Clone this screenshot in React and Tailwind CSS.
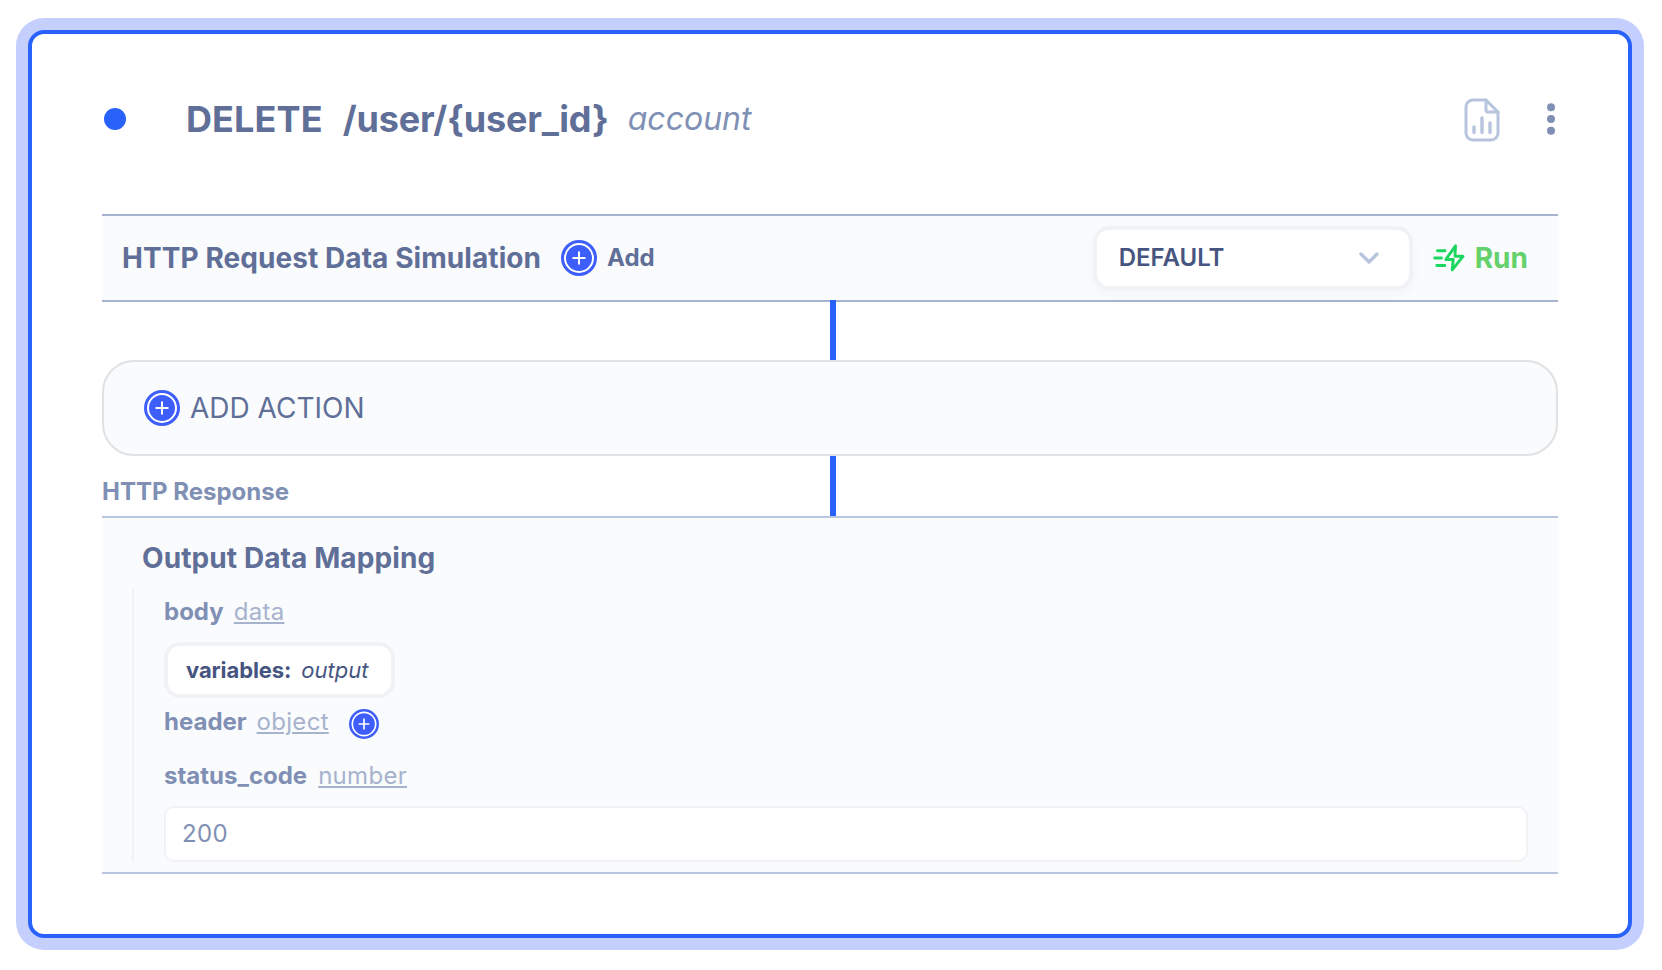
function PlusBadge({ className }) {
  return (
    <svg viewBox="0 0 36 36" className={className} fill="none">
      <circle cx="18" cy="18" r="18" fill="#3d5efa" />
      <circle cx="18" cy="18" r="14" stroke="#fff" strokeWidth="2" />
      <path d="M18 11.500v13M11.500 18h13" stroke="#fff" strokeWidth="2" />
    </svg>
  );
}

function ReportIcon() {
  return (
    <svg viewBox="0 0 36 44" className="mt-0.5 h-11 w-9 shrink-0" fill="none" stroke="#b8c3de" strokeWidth="3" strokeLinecap="round" strokeLinejoin="round">
      <path d="M22 2H9a7 7 0 0 0-7 7v26a7 7 0 0 0 7 7h18a7 7 0 0 0 7-7V14Z" />
      <path d="M22 2v10.500a1.500 1.500 0 0 0 1.500 1.500H34" />
      <path d="M10 29v5.500M18 20v14.500M26 25v9.500" strokeWidth="3.400" />
    </svg>
  );
}

function RunIcon() {
  return (
    <svg viewBox="0 0 32 28" className="h-7 w-8 shrink-0" fill="none" stroke="#1bd760" strokeWidth="2.900" strokeLinecap="round" strokeLinejoin="round">
      <path d="M22.500 1.800 12.800 15.500H20.200l-1 10.300L30 12.300h-8Z" />
      <path d="M4.500 6.700h7.500M1.700 14h6.800M3.800 21.500h8" />
    </svg>
  );
}

function Field({ name, type, className = "", children }) {
  return (
    <div className={`flex h-[54px] items-center gap-[10px] text-2xl ${className}`}>
      <span className="font-bold text-[#8090b4]">{name}</span>
      <span className="tracking-[0.012em] text-[#a7b3ce] underline decoration-2 underline-offset-2">{type}</span>
      {children}
    </div>
  );
}

export default function App() {
  return (
    <div className="h-[970px] w-[1662px] bg-white px-4 pt-[18px] font-['Inter',sans-serif] text-[#5f6f98]">
      <div className="h-[932px] w-[1628px] rounded-[28px] bg-[#c5cffd] p-3">
        <main className="h-full rounded-2xl border-4 border-[#2962fa] bg-white px-[70px]">
          <header className="flex h-[180px] items-center pb-[10px]">
            <span className="ml-0.5 size-[22px] rounded-full bg-[#2962fa]" />
            <h1 className="ml-[60px] flex items-center text-4xl font-bold">
              <span className="tracking-[0.003em]">DELETE</span>
              <span className="ml-5 tracking-[-0.005em]">/user/&#123;user_id&#125;</span>
            </h1>
            <span className="ml-[19px] text-[32px] text-[#8090b4] italic">account</span>
            <div className="ml-auto flex items-center gap-[47px] pr-[3px]">
              <ReportIcon />
              <svg viewBox="0 0 8 32" className="h-8 w-2" fill="#8090b4">
                <circle cx="4" cy="4.200" r="4" />
                <circle cx="4" cy="16" r="4" />
                <circle cx="4" cy="27.800" r="4" />
              </svg>
            </div>
          </header>

          <section className="flex h-[88px] items-center border-y-2 border-[#a7b4cf] bg-[#fafbfd] pr-[30px] pl-5">
            <h2 className="text-[28px] font-bold tracking-[0.0025em]">HTTP Request Data Simulation</h2>
            <PlusBadge className="ml-5 size-9" />
            <span className="ml-[10px] text-2xl font-bold">Add</span>
            <div className="ml-auto flex h-16 w-80 items-center justify-between rounded-2xl border-4 border-[#f1f2f6] bg-white pr-[30px] pl-[22px] shadow-[0_4px_12px_rgba(20,30,60,0.03)]">
              <span className="text-2xl font-semibold text-[#465580]">DEFAULT</span>
              <svg viewBox="0 0 20 12" className="h-3 w-5" fill="none" stroke="#b9c4de" strokeWidth="3.500" strokeLinecap="round" strokeLinejoin="round">
                <path d="m2 2 8 8 8-8" />
              </svg>
            </div>
            <div className="ml-5 flex items-center gap-[10px]">
              <RunIcon />
              <span className="text-[28px] font-bold text-[#65d16c]">Run</span>
            </div>
          </section>
          <div className="-mt-0.5 ml-[728px] h-[60px] w-1.5 bg-[#2962fa]" />

          <section className="flex h-24 items-center gap-[10px] rounded-[32px] border-2 border-[#e0e1e3] bg-[#fafbfd] pl-10">
            <PlusBadge className="size-9" />
            <span className="text-[28px]">ADD ACTION</span>
          </section>

          <div className="flex h-[60px]">
            <span className="w-[728px] pt-5 text-2xl font-bold text-[#8090b4]">HTTP Response</span>
            <span className="w-1.5 bg-[#2962fa]" />
          </div>

          <section className="h-[358px] border-y-2 border-[#b9c4de] bg-[#fafbfd] pr-[30px] pl-[30px]">
            <h2 className="h-[70px] pt-[19px] pl-[10px] text-[28px] font-bold tracking-[0.0035em]">Output Data Mapping</h2>
            <div className="flex h-[274px] flex-col border-l-2 border-[#f1f2f6] pl-[30px]">
              <Field name="body" type="data" className="-mt-[3px]" />
              <div className="mt-[3px] flex h-14 w-[231px] shrink-0 items-center gap-[10px] rounded-2xl border-4 border-[#f1f2f6] bg-white pl-[18px] text-[22px] text-[#465580]">
                <span className="font-bold tracking-[-0.004em]">variables:</span>
                <span className="italic">output</span>
              </div>
              <Field name="header" type="object" className="-mt-[3px]">
                <PlusBadge className="mt-[3px] ml-[10px] size-[30px]" />
              </Field>
              <Field name="status_code" type="number" className="gap-[11px]" />
              <div className="mt-[3px] flex h-14 shrink-0 items-center rounded-[10px] border-2 border-[#f1f2f6] bg-white pl-4 text-2xl tracking-[0.015em] text-[#8090b4]">200</div>
            </div>
          </section>
        </main>
      </div>
    </div>
  );
}
